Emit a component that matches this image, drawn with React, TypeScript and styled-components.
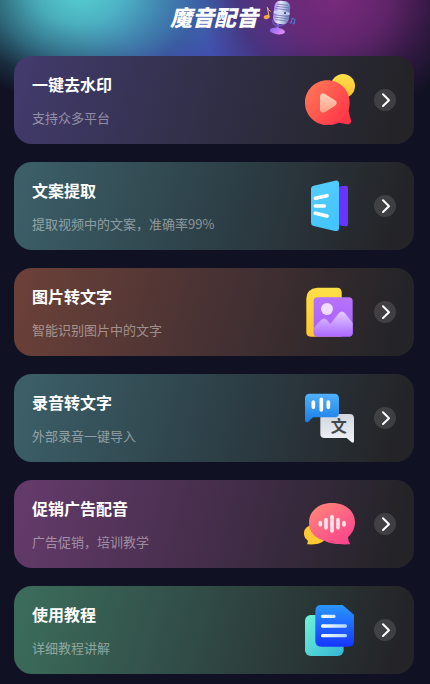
import React from "react";
import styled, { createGlobalStyle } from "styled-components";

const GlobalStyle = createGlobalStyle`
  *, *::before, *::after { box-sizing: border-box; }
  html { background: #101122; }
  body {
    margin: 0;
    font-family: "Noto Sans CJK SC", sans-serif;
    color: #fff;
  }
`;

const Page = styled.div`
  min-height: 100vh;
  padding: 0 16px 10px 14px;
  background:
    radial-gradient(ellipse 150px 112px at 80px -8px, #56cfd2 0%, #4fc2cae0 28%, #3f9aaca0 58%, #2f6f8450 80%, #2a5f7000 100%),
    radial-gradient(ellipse 140px 130px at 335px -8px, #7a2a7c 0%, #6c2672d8 40%, #4d1f5c90 70%, #20133000 100%),
    radial-gradient(ellipse 200px 130px at 205px 14px, #4060b8 0%, #4048a8 45%, #36368890 70%, #10112200 100%),
    #101122;
  background-repeat: no-repeat;
`;

const Header = styled.header`
  display: grid;
  grid-template-columns: 1fr auto 1fr;
  gap: 4px;
  height: 56px;
`;

const Brand = styled.h1`
  grid-column: 2;
  margin: 0;
  font-size: 22px;
  line-height: 32px;
  font-weight: 900;
  font-style: italic;
`;

const MicArt = styled.svg`
  width: 34px;
  height: 36px;
`;

const CardList = styled.ul`
  display: flex;
  flex-direction: column;
  gap: 18px;
  margin: 0;
  padding: 0;
  list-style: none;
`;

const Card = styled.a<{ $from: string; $mid: string }>`
  display: flex;
  align-items: center;
  gap: 16px;
  height: 88px;
  padding: 0 18px;
  border-radius: 18px;
  background: linear-gradient(105deg, ${(p) => p.$from} 4%, ${(p) => p.$mid} 52%, #242428 94%);
  color: inherit;
  text-decoration: none;
`;

const CardText = styled.div`
  flex: 1;
  min-width: 0;
`;

const CardTitle = styled.h2`
  margin: 0 0 12px;
  font-size: 16px;
  line-height: 24px;
  font-weight: 700;
`;

const CardNote = styled.p`
  margin: 0;
  font-size: 13px;
  line-height: 20px;
  color: rgba(255, 255, 255, 0.45);
`;

const CardArt = styled.svg`
  flex: none;
  width: 56px;
  height: 56px;
`;

const Arrow = styled.span`
  flex: none;
  display: grid;
  place-items: center;
  width: 22px;
  height: 22px;
  border-radius: 50%;
  background: rgba(255, 255, 255, 0.12);
`;

const Chevron = styled.svg`
  width: 22px;
  height: 22px;
`;

function Microphone() {
  return (
    <MicArt viewBox="0 0 102 108" aria-hidden="true">
      <defs>
        <linearGradient id="micHead" x1="0" y1="0" x2="1" y2="0">
          <stop offset="0" stopColor="#aa83f5" />
          <stop offset="0.35" stopColor="#e9ecff" />
          <stop offset="0.7" stopColor="#aeb9e2" />
          <stop offset="1" stopColor="#6c72b9" />
        </linearGradient>
        <linearGradient id="micBase" x1="0" y1="0" x2="1" y2="0.3">
          <stop offset="0" stopColor="#7d62ee" />
          <stop offset="1" stopColor="#e38bf5" />
        </linearGradient>
      </defs>
      <path d="M48 72 L46 88" stroke="#8e75e8" strokeWidth="7" />
      <ellipse cx="46" cy="93" rx="23" ry="10" fill="url(#micBase)" transform="rotate(8 46 93)" />
      <path d="M32 61 Q32 76 47 78 Q65 79 73 65" fill="none" stroke="#6455bd" strokeWidth="5" />
      <g transform="rotate(7 59 38)">
        <rect x="35" y="3" width="48" height="69" rx="17" fill="url(#micHead)" />
        <path
          d="M43 14 H75 M40 21 H78 M39 28 H79 M39 47 H79 M40 54 H78 M43 61 H75"
          stroke="#5c639d"
          strokeWidth="2"
        />
        <path d="M35 35 H83 V42 H35 Z" fill="#cdd6f5" />
        <circle cx="69" cy="38" r="3" fill="#35365e" />
      </g>
      <ellipse cx="14" cy="51" rx="9" ry="6" fill="#f5a34d" transform="rotate(-15 14 51)" />
      <path d="M21 50 L16 22 Q18 30 25 34" fill="none" stroke="#efbd74" strokeWidth="3" strokeLinecap="round" />
      <g fill="none" stroke="#4b7fd2" strokeWidth="3">
        <path d="M88 68 L90 55 L99 58 L97 69" />
        <circle cx="86" cy="68" r="2" />
        <circle cx="95" cy="70" r="2" />
      </g>
    </MicArt>
  );
}

function WatermarkArt() {
  return (
    <CardArt viewBox="36 51 168 168" aria-hidden="true">
      <defs>
        <linearGradient id="wmRed" x1="0" y1="0.1" x2="1" y2="0.9">
          <stop offset="0" stopColor="#ff7a55" />
          <stop offset="1" stopColor="#ff3049" />
        </linearGradient>
        <linearGradient id="wmPlay" x1="0" y1="0" x2="0" y2="1">
          <stop offset="0" stopColor="#ffd0b8" />
          <stop offset="1" stopColor="#ffa08a" />
        </linearGradient>
        <linearGradient id="wmSun" x1="0" y1="0" x2="0" y2="1">
          <stop offset="0" stopColor="#ffe04b" />
          <stop offset="1" stopColor="#ffbf2d" />
        </linearGradient>
      </defs>
      <circle cx="159" cy="93" r="36" fill="url(#wmSun)" />
      <path
        d="M112 76 C150 76 179 106 179 143 C179 154 176 162 176 170 L183 196 C185 204 179 209 171 208 L147 203 C136 208 125 210 112 210 C75 210 45 180 45 143 C45 106 75 76 112 76 Z"
        fill="url(#wmRed)"
      />
      <path
        d="M90 126 C90 117 97 112 105 117 L135 136 C142 141 142 147 135 152 L105 171 C97 176 90 171 90 163 Z"
        fill="url(#wmPlay)"
      />
    </CardArt>
  );
}

function CopyArt() {
  return (
    <CardArt viewBox="36 54 168 168" aria-hidden="true">
      <defs>
        <linearGradient id="cpBlue" x1="0" y1="0" x2="0.4" y2="1">
          <stop offset="0" stopColor="#55cdfc" />
          <stop offset="1" stopColor="#45c5ff" />
        </linearGradient>
      </defs>
      <path d="M140 81 L165 77 Q174 76 174 85 V191 Q174 200 165 199 L140 195 Z" fill="#6b33ff" />
      <path
        d="M71 77 L135 62 Q147 60 147 71 V204 Q147 215 135 213 L71 198 Q63 196 63 188 V86 Q63 79 71 77 Z"
        fill="url(#cpBlue)"
      />
      <path d="M76 115 L111 107 M76 138 H103 M76 160 L111 168" stroke="#fff" strokeWidth="11" strokeLinecap="round" />
    </CardArt>
  );
}

function PictureArt() {
  return (
    <CardArt viewBox="36 57 168 168" aria-hidden="true">
      <defs>
        <linearGradient id="picBack" x1="0" y1="0" x2="0" y2="1">
          <stop offset="0" stopColor="#ffe047" />
          <stop offset="1" stopColor="#ffc72f" />
        </linearGradient>
        <linearGradient id="picFront" x1="0" y1="0" x2="0" y2="1">
          <stop offset="0" stopColor="#b873fa" />
          <stop offset="1" stopColor="#a55dff" />
        </linearGradient>
        <linearGradient id="picHill" x1="0" y1="0" x2="0" y2="1">
          <stop offset="0" stopColor="#e4ccff" />
          <stop offset="1" stopColor="#ab69ff" />
        </linearGradient>
      </defs>
      <path d="M82 68 H141 Q155 68 155 82 V215 H62 Q49 215 49 202 V101 Q49 71 82 68 Z" fill="url(#picBack)" />
      <rect x="71" y="97" width="117" height="118" rx="12" fill="url(#picFront)" />
      <circle cx="111" cy="132" r="18" fill="#efdcff" />
      <path
        d="M72 188 L92 166 Q102 155 111 165 L121 177 L145 146 Q157 132 167 147 L188 174 V203 Q188 214 176 214 H84 Q72 214 72 203 Z"
        fill="url(#picHill)"
      />
    </CardArt>
  );
}

function TranscribeArt() {
  return (
    <CardArt viewBox="36 60 168 168" aria-hidden="true">
      <defs>
        <linearGradient id="trBlue" x1="0" y1="0" x2="0" y2="1">
          <stop offset="0" stopColor="#51b1fb" />
          <stop offset="1" stopColor="#1b7ee6" />
        </linearGradient>
        <linearGradient id="trGrey" x1="0" y1="0" x2="0" y2="1">
          <stop offset="0" stopColor="#d1d6e0" />
          <stop offset="1" stopColor="#f0f2f6" />
        </linearGradient>
      </defs>
      <path
        d="M104 132 H179 Q192 132 192 145 V212 Q192 222 184 216 L170 204 H104 Q91 204 91 191 V145 Q91 132 104 132 Z"
        fill="url(#trGrey)"
      />
      <path
        d="M59 71 H133 Q147 71 147 85 V128 Q147 142 133 142 H69 L55 155 Q45 161 45 150 V85 Q45 71 59 71 Z"
        fill="url(#trBlue)"
      />
      <path d="M70 96 V112 M94 88 V120 M115 96 V112" stroke="#fff" strokeWidth="11" strokeLinecap="round" />
      <text
        x="146"
        y="186"
        fill="#42474e"
        fontSize="48"
        fontWeight="700"
        textAnchor="middle"
      >
        文
      </text>
    </CardArt>
  );
}

function VoiceArt() {
  return (
    <CardArt viewBox="36 54 168 168" aria-hidden="true">
      <defs>
        <linearGradient id="vcPink" x1="0" y1="0" x2="0.8" y2="1">
          <stop offset="0" stopColor="#ff8b74" />
          <stop offset="1" stopColor="#fa438f" />
        </linearGradient>
      </defs>
      <path
        d="M62 142 C47 147 41 157 42 169 C43 178 47 183 53 187 Q55 193 51 199 C71 200 90 199 102 188 Z"
        fill="#ffca34"
      />
      <path
        d="M126 75 C166 75 195 99 195 133 C195 151 187 166 174 178 Q174 189 181 199 C153 200 119 199 100 187 C73 179 57 160 57 134 C57 99 86 75 126 75 Z"
        fill="url(#vcPink)"
      />
      <path
        d="M91 134 V141 M108 125 V149 M126 116 V159 M144 125 V149 M162 134 V141"
        stroke="#ffe2ea"
        strokeWidth="11"
        strokeLinecap="round"
      />
    </CardArt>
  );
}

function GuideArt() {
  return (
    <CardArt viewBox="36 54 168 168" aria-hidden="true">
      <defs>
        <linearGradient id="gdMint" x1="0" y1="0" x2="1" y2="1">
          <stop offset="0" stopColor="#70f5d8" />
          <stop offset="1" stopColor="#35b4d4" />
        </linearGradient>
        <linearGradient id="gdBlue" x1="0" y1="0" x2="0" y2="1">
          <stop offset="0" stopColor="#2996ff" />
          <stop offset="1" stopColor="#1735ff" />
        </linearGradient>
        <linearGradient id="gdLine" gradientUnits="userSpaceOnUse" x1="92" y1="0" x2="172" y2="0">
          <stop offset="0" stopColor="#fff" />
          <stop offset="1" stopColor="#a9d6ff" />
        </linearGradient>
      </defs>
      <rect x="45" y="93" width="116" height="123" rx="17" fill="url(#gdMint)" />
      <path
        d="M94 63 H158 L192 92 V171 Q192 188 175 188 H94 Q76 188 76 171 V80 Q76 63 94 63 Z"
        fill="url(#gdBlue)"
      />
      <path
        d="M97 92 H133 Q137 92 137 97 Q137 102 133 102 H97 Q93 102 93 97 Q93 92 97 92 Z M97 121 H167 Q171 121 171 126 Q171 131 167 131 H97 Q93 131 93 126 Q93 121 97 121 Z M97 150 H167 Q171 150 171 155 Q171 160 167 160 H97 Q93 160 93 155 Q93 150 97 150 Z"
        fill="url(#gdLine)"
      />
    </CardArt>
  );
}

const features = [
  { title: "一键去水印", note: "支持众多平台", from: "#413a6a", mid: "#302e45", Art: WatermarkArt },
  { title: "文案提取", note: "提取视频中的文案，准确率99%", from: "#3b5e67", mid: "#2d3f47", Art: CopyArt },
  { title: "图片转文字", note: "智能识别图片中的文字", from: "#6a4038", mid: "#463133", Art: PictureArt },
  { title: "录音转文字", note: "外部录音一键导入", from: "#3b5e67", mid: "#2d3f47", Art: TranscribeArt },
  { title: "促销广告配音", note: "广告促销，培训教学", from: "#633a69", mid: "#432d49", Art: VoiceArt },
  { title: "使用教程", note: "详细教程讲解", from: "#3b6b5a", mid: "#2f4643", Art: GuideArt },
];

export default function App() {
  return (
    <Page>
      <GlobalStyle />
      <Header>
        <Brand>魔音配音</Brand>
        <Microphone />
      </Header>
      <main>
        <CardList>
          {features.map(({ title, note, from, mid, Art }) => (
            <li key={title}>
              <Card href="#" $from={from} $mid={mid}>
                <CardText>
                  <CardTitle>{title}</CardTitle>
                  <CardNote>{note}</CardNote>
                </CardText>
                <Art />
                <Arrow>
                  <Chevron viewBox="0 0 22 22" aria-hidden="true">
                    <path
                      d="M9 5.3 L15 11.2 L9 17"
                      fill="none"
                      stroke="#fff"
                      strokeWidth="2"
                      strokeLinecap="round"
                      strokeLinejoin="round"
                    />
                  </Chevron>
                </Arrow>
              </Card>
            </li>
          ))}
        </CardList>
      </main>
    </Page>
  );
}
